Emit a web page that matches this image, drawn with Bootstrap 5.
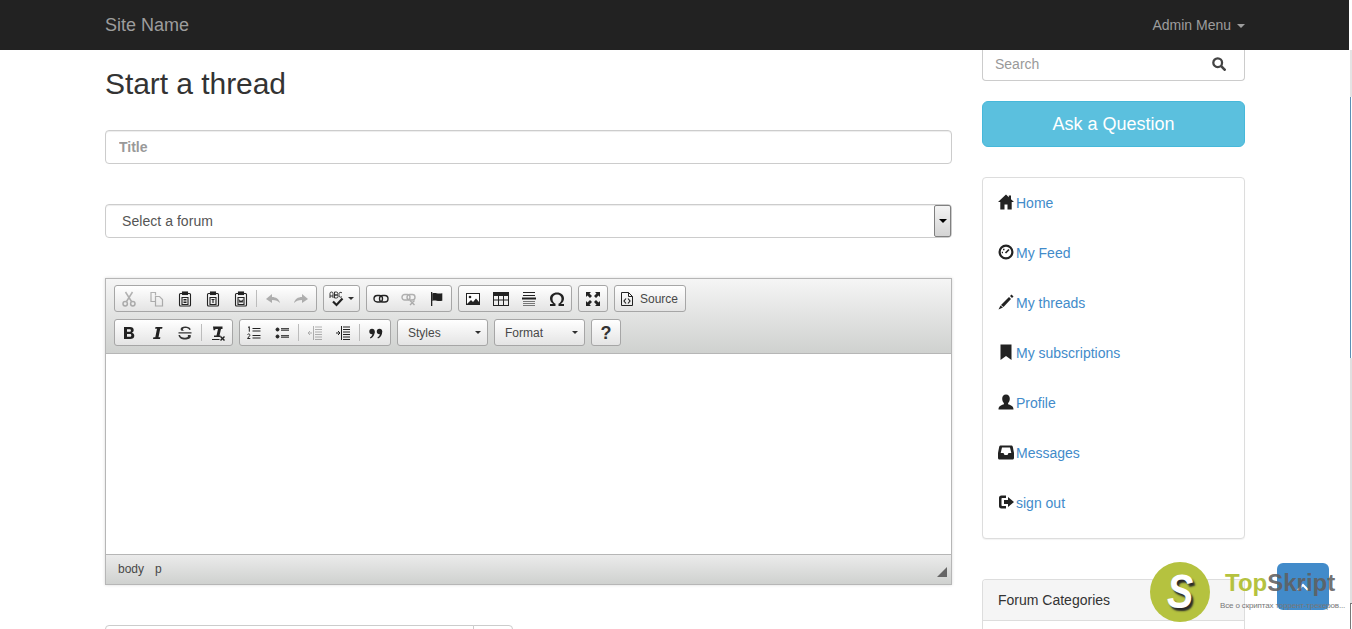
<!DOCTYPE html>
<html lang="en">
<head>
<meta charset="utf-8">
<title>Start a thread</title>
<link href="https://cdn.jsdelivr.net/npm/bootstrap@5.3.0/dist/css/bootstrap.min.css" rel="stylesheet">
<style>
html,body{height:629px;overflow:hidden}
body{font-family:"Liberation Sans",Arial,sans-serif;font-size:14px;line-height:20px;color:#333;background:#fff;position:relative}
.topbar{background:#222;height:50px;padding:0;border:0;margin-right:3px}
.shell{width:1140px;margin-left:105px;display:flex;gap:30px}
.topbar .shell{align-items:center;justify-content:space-between;height:50px}
.site-brand{font-size:18px;color:#9d9d9d;text-decoration:none;padding:0;margin:0}
.admin-link{color:#9d9d9d;text-decoration:none;font-size:14px}
.admin-link::after{content:"";display:inline-block;margin-left:6px;vertical-align:2px;border-top:4px solid #9d9d9d;border-left:4px solid transparent;border-right:4px solid transparent}
.maincol{width:847px;flex:none}
.sidecol{width:263px;flex:none}
.page-title{font-size:30px;line-height:33px;font-weight:400;margin:17px 0 30px;color:#333;font-family:inherit;letter-spacing:-.06px}
.fld{height:34px;font-size:14px;border:1px solid #ccc;border-radius:4px;color:#555;box-shadow:inset 0 1px 1px rgba(0,0,0,.075);font-family:inherit}
.title-fld{padding:6px 13px;font-size:14px;font-weight:700;margin-bottom:40px}
.title-fld::placeholder{color:#999;opacity:1}
.selwrap{position:relative;margin-bottom:40px}
.sel-fld{padding:6px 16px;background-image:none;appearance:none;background:#fff;letter-spacing:.05px}
.selarrow{position:absolute;right:1px;top:1px;width:17px;height:32px;border:1px solid #808080;border-radius:2px;background:linear-gradient(#f4f4f4,#d4d4d4);display:flex;align-items:center;justify-content:center}
.selarrow::after{content:"";border-top:4px solid #000;border-left:4px solid transparent;border-right:4px solid transparent}
.editor{border:1px solid #b6b6b6;height:307px;display:flex;flex-direction:column;box-shadow:0 0 3px rgba(0,0,0,.15);margin-bottom:40px;background:#fff}
.edtop{height:75px;background:linear-gradient(#f5f5f5,#cfd1cf);border-bottom:1px solid #b6b6b6;padding:6px 8px 0;flex:none}
.edrow{display:flex;gap:6px;height:27px;margin-bottom:7px}
.edgrp{display:flex;align-items:center;height:27px;border:1px solid #a6a6a6;border-radius:3px;background:linear-gradient(#fff,#e4e4e4);flex:none}
.edgrp-wide{padding-right:1px}
.tb{width:28px;height:25px;display:flex;align-items:center;justify-content:center;flex:none}
.tb svg{width:16px;height:16px;display:block}
.off svg{opacity:.32}
.sep{width:1px;height:17px;background:#bcbcbc;margin:0 2px 0 1px;flex:none}
.sep-wide{margin:0 2px}
.combo{display:flex;align-items:center;justify-content:space-between;width:89px;padding:0 6px 0 10px;font-size:12px;color:#484848}
.combo::after{content:"";border-top:3px solid #2f2f2f;border-left:3px solid transparent;border-right:3px solid transparent}
.spell{width:18px;margin-left:5px}
.spell svg{width:18px}
.spell-arrow{width:12px;padding:0 0 0 1px}
.helpq{font-size:18px;font-weight:700;color:#333}
.srcbtn{width:70px;font-size:12px;color:#484848;display:flex;align-items:center;gap:5px;padding-left:4px;height:25px}
.srcbtn svg{width:16px;height:16px}
.edbody{flex:1;background:#fff}
.edfoot{height:30px;flex:none;background:linear-gradient(#ebebeb,#cfd1cf);border-top:1px solid #b6b6b6;display:flex;align-items:center;padding:0 12px 2px;font-size:12px;color:#484848;gap:11px;position:relative}
.grip{position:absolute;right:4px;bottom:7px;border-bottom:10px solid #666;border-left:10px solid transparent}
.tailgrp{width:408px;height:34px}
.tailgrp .form-control{height:34px;border-color:#ccc;border-radius:4px 0 0 4px}
.tailgrp .input-group-text{width:40px;background:#fff;border-color:#ccc;border-radius:0 4px 4px 0}
.srch{position:relative;height:31px;margin-bottom:20px}
.srch input{height:31px;border-top:0;border-radius:0 0 4px 4px;padding:0 12px 2px 12px;box-shadow:none}
.srch input::placeholder{color:#999;opacity:1}
.srch svg{position:absolute;right:19px;top:7px;width:14px;height:14px}
.askbtn{display:block;width:100%;height:46px;background:#5bc0de;border:1px solid #46b8da;border-radius:6px;color:#fff;font-size:18px;line-height:33px;margin-bottom:30px;padding:6px 0}
.navpanel{height:362px;border:1px solid #ddd;border-radius:4px;box-shadow:0 1px 1px rgba(0,0,0,.05);padding:0 15px;margin-bottom:40px;background:#fff}
.navpanel .list-group-item{border:0;padding:0;height:50px;display:flex;align-items:center;background:transparent}
.navpanel a{color:#428bca;text-decoration:none;margin-left:2px}
.navpanel svg{width:16px;height:16px;color:#222;flex:none;margin-top:-3px}
.catpanel{border:1px solid #ddd;border-radius:4px 4px 0 0;border-bottom:0;background:#fff}
.catpanel .card-header{background:#f5f5f5;height:41px;padding:10px 15px;border-bottom:1px solid #ddd;border-radius:3px 3px 0 0;color:#333;font-size:14px}
.catpanel .card-body{height:40px}
.edgerail{position:absolute;left:1350px;top:50px;width:2px;height:579px;display:flex;flex-direction:column}
.rail-a{height:47px;background:#e4e4e4}
.rail-b{height:261px;width:1px;background:#5a8fb5}
.rail-c{height:245px;background:#e0e0e0}
.rail-d{height:26px;border:1px solid #777;border-right:0;border-bottom:0}
.totop{position:absolute;left:1277px;top:563px;width:52px;height:47px;background:#428bca;border-radius:6px;border:0;padding:0;display:flex;align-items:center;justify-content:center}
.totop svg{width:14px;height:10px}
.wm-disc{position:absolute;left:1150px;top:562px;width:60px;height:60px;border-radius:50%;background:#b5c23f;display:flex;align-items:center;justify-content:center}
.wm-s{display:block;font-size:48px;font-weight:700;font-style:italic;color:#fff;line-height:60px;text-shadow:3px 3px 2px #2a2a2a;transform:scaleX(.82)}
.wm-name{position:absolute;left:1225px;top:570px;font-size:24px;line-height:26px;font-weight:700;white-space:nowrap}
.wm-name b{color:#b5c23f}
.wm-name i{font-style:normal;color:rgba(95,95,95,.9)}
.wm-sub{position:absolute;left:1220px;top:600px;font-size:8px;line-height:12px;color:#777;white-space:nowrap;letter-spacing:-.15px}
</style>
</head>
<body>
<nav class="navbar topbar">
  <div class="shell">
    <a class="navbar-brand site-brand" href="#">Site Name</a>
    <a class="admin-link" href="#">Admin Menu</a>
  </div>
</nav>

<div class="shell">
  <main class="maincol">
    <h1 class="page-title">Start a thread</h1>
    <input class="form-control fld title-fld" placeholder="Title">
    <div class="selwrap">
      <select class="form-select fld sel-fld"><option>Select a forum</option></select>
      <span class="selarrow"></span>
    </div>
    <div class="editor">
      <div class="edtop">
        <div class="edrow">
          <div class="edgrp edgrp-wide">
            <span class="tb off"><svg viewBox="0 0 16 16" fill="none" stroke="#222" stroke-width="1.5"><path d="M4.500 1 10.500 10.500M11.500 1 5.500 10.500"/><circle cx="4.200" cy="12.800" r="2.200"/><circle cx="11.800" cy="12.800" r="2.200"/></svg></span>
            <span class="tb off"><svg viewBox="0 0 16 16" fill="none" stroke="#222" stroke-width="1.200"><path d="M6.500 4.500V1.500H2v9h4"/><path d="M6.500 5.500h4l3 3v6.500h-7z"/></svg></span>
            <span class="tb"><svg viewBox="0 0 16 16" fill="none" stroke="#222" stroke-width="1.100"><path d="M5 2.500H3.500a1 1 0 0 0-1 1v10.500a1 1 0 0 0 1 1h9a1 1 0 0 0 1-1V3.500a1 1 0 0 0-1-1H11"/><rect x="5.500" y="1" width="5" height="2.500" fill="#222"/><path d="M5 6.500h6v7H5zM6.500 8.500h3M6.500 10h3M6.500 11.500h3"/></svg></span>
            <span class="tb"><svg viewBox="0 0 16 16" fill="none" stroke="#222" stroke-width="1.100"><path d="M5 2.500H3.500a1 1 0 0 0-1 1v10.500a1 1 0 0 0 1 1h9a1 1 0 0 0 1-1V3.500a1 1 0 0 0-1-1H11"/><rect x="5.500" y="1" width="5" height="2.500" fill="#222"/><path d="M5 6.500h6v7H5zM6.500 8.500h3M8 8.500v3.500"/></svg></span>
            <span class="tb"><svg viewBox="0 0 16 16" fill="none" stroke="#222" stroke-width="1.100"><path d="M5 2.500H3.500a1 1 0 0 0-1 1v10.500a1 1 0 0 0 1 1h9a1 1 0 0 0 1-1V3.500a1 1 0 0 0-1-1H11"/><rect x="5.500" y="1" width="5" height="2.500" fill="#222"/><path d="M5 6.500h6v7H5z"/><path d="M6 8.500l1 3 1-2 1 2 1-3" stroke-width="1"/></svg></span>
            <span class="sep"></span>
            <span class="tb off"><svg viewBox="0 0 16 16" fill="#222"><path d="M1 8l6-5v3c4 0 7 2 8 6-2-2-4-3-8-3v3z"/></svg></span>
            <span class="tb off"><svg viewBox="0 0 16 16" fill="#222"><path d="M15 8 9 3v3c-4 0-7 2-8 6 2-2 4-3 8-3v3z"/></svg></span>
          </div>
          <div class="edgrp">
            <span class="tb spell"><svg viewBox="0 0 18 16" fill="none" stroke="#222"><path d="M1 7V2.500a1.300 1.300 0 0 1 3 0V7M1 5h3M5.500 7V1h1.800a1.400 1.400 0 0 1 0 3H5.500h2a1.500 1.500 0 0 1 0 3zM13 2a1.700 1.700 0 0 0-3 1.500V5a1.700 1.700 0 0 0 3 .5" stroke-width=".9"/><path d="M4 10.500l3.500 3.500 6-6.500" stroke-width="2.200"/></svg></span>
            <span class="combo spell-arrow"></span>
          </div>
          <div class="edgrp">
            <span class="tb"><svg viewBox="0 0 16 16" fill="none" stroke="#222" stroke-width="1.400"><rect x="1" y="4.500" width="8.500" height="6.500" rx="3.200"/><rect x="6.500" y="4.500" width="8.500" height="6.500" rx="3.200"/></svg></span>
            <span class="tb off"><svg viewBox="0 0 16 16" fill="none" stroke="#222" stroke-width="1.400"><rect x="1" y="3.500" width="8" height="5.500" rx="2.700"/><rect x="6" y="3.500" width="8" height="5.500" rx="2.700"/><path d="M9 9.500l4.500 4.500M13.500 9.500 9 14"/></svg></span>
            <span class="tb"><svg viewBox="0 0 16 16" fill="#222"><path d="M2 1h1.300v14H2z"/><path d="M3.300 2.500c3-1.500 5 1 10-.3v7.500c-5 1.300-7-1.200-10 .3z"/></svg></span>
          </div>
          <div class="edgrp">
            <span class="tb"><svg viewBox="0 0 16 16"><rect x="1.500" y="2.500" width="13" height="11" fill="#fff" stroke="#222"/><circle cx="5" cy="6" r="1.300" fill="#222"/><path d="M2 13l4-4 2 2 3-3.500 3 3.500V13z" fill="#222"/></svg></span>
            <span class="tb"><svg viewBox="0 0 16 16" fill="none" stroke="#222"><rect x=".5" y="1.500" width="15" height="13"/><path d="M.5 3.500h15" stroke-width="3"/><path d="M.5 9h15M5.500 4v10M10.500 4v10"/></svg></span>
            <span class="tb"><svg viewBox="0 0 16 16" stroke="#222"><path d="M2 1.500h12M2 4.500h12" stroke-width="1"/><path d="M1 7.500h14" stroke-width="2"/><path d="M2 10.500h12M2 12.500h12M2 14.500h12" stroke="#777"/></svg></span>
            <span class="tb"><svg viewBox="0 0 16 16" fill="#222"><path d="M1 15v-2h3.200C2 11.500 1 9.500 1 7.500 1 4 4 1.500 8 1.500s7 2.500 7 6c0 2-1 4-3.200 5.500H15v2H9.500v-2.200c1.900-.8 3-2.700 3-5 0-2.700-1.800-4.400-4.500-4.400S3.500 5.100 3.500 7.800c0 2.300 1.100 4.200 3 5V15z"/></svg></span>
          </div>
          <div class="edgrp">
            <span class="tb"><svg viewBox="0 0 16 16" fill="#222"><path d="M1 1h5L4.500 2.500 7 5 5 7 2.500 4.500 1 6zM15 1v5l-1.500-1.500L11 7 9 5l2.500-2.500L10 1zM1 15v-5l1.500 1.500L5 9l2 2-2.500 2.500L6 15zM15 15h-5l1.500-1.500L9 11l2-2 2.500 2.500L15 10z"/></svg></span>
          </div>
          <div class="edgrp">
            <span class="srcbtn"><svg viewBox="0 0 16 16" fill="none" stroke="#222"><path d="M2.500 1.500h7l4 4v9h-11zM9.500 1.500v4h4" stroke-width="1"/><path d="M7 7.500 5 10l2 2.500M9 7.500l2 2.500-2 2.500" stroke-width="1.200"/></svg>Source</span>
          </div>
        </div>
        <div class="edrow">
          <div class="edgrp">
            <span class="tb"><svg viewBox="0 0 16 16" fill="#222"><path d="M3 2h6c2.500 0 3.700 1.200 3.700 3 0 1.300-.7 2.200-1.800 2.700 1.500.4 2.400 1.500 2.400 3 0 2.200-1.600 3.300-4.300 3.300H3zm3 2.200v2.600h2.500c1 0 1.400-.5 1.400-1.300s-.5-1.300-1.400-1.300zM6 9v2.800h2.800c1 0 1.500-.5 1.500-1.400S9.800 9 8.800 9z"/></svg></span>
            <span class="tb"><svg viewBox="0 0 16 16" fill="#222"><path d="M6.500 2h7l-.4 1.800h-1.900L9.500 12.200h1.900L11 14H4l.4-1.800h1.900L8 3.800H6.100z"/></svg></span>
            <span class="tb"><svg viewBox="0 0 16 16" fill="#333"><path d="M12.300 5c-.5-1.500-2-1.900-3.800-1.900-1.500 0-2.500.5-2.500 1.400 0 .6.500 1 1.500 1.300H4.600C3.900 5.300 3.600 4.800 3.600 4.200 3.600 2.300 5.600 1.500 8.300 1.500c2.500 0 4.800.7 5.500 3zM1.500 7.300h13v1.300h-13zM3 10c.4 1.700 2 2.800 5 2.800 1.800 0 3-.6 3-1.700 0-.3-.1-.7-.4-1.100h2.900c.2.400.3.800.3 1.200 0 2.200-2.500 3.300-5.800 3.300-3.400 0-6-1.200-6.500-4.500z"/></svg></span>
            <span class="sep sep-wide"></span>
            <span class="tb"><svg viewBox="0 0 16 16" fill="#222"><path d="M3 1.500h9.500V4H11L9.500 10.500h1V12H4v-1.500h2.500L8 4H5.500L5 5.200H3.500z"/><path d="M2 14h7.500v1H2z"/><path d="m11 11 1.500 1.500L14 11l1 1-1.500 1.500L15 15l-1 1-1.500-1.500L11 16l-1-1 1.500-1.500L10 12z"/></svg></span>
          </div>
          <div class="edgrp">
            <span class="tb"><svg viewBox="0 0 16 16" stroke="#222" fill="none"><path d="M6.500 3.500h8M6.500 6h8M6.500 10.500h8M6.500 13h8" stroke-width="1.200"/><path d="M2 2.500l1.300-.8v5M1.500 9.500c1-1 2.800-.5 2.300 1L1.500 13.500h2.800" stroke-width="1"/></svg></span>
            <span class="tb"><svg viewBox="0 0 16 16" stroke="#222" fill="#222"><circle cx="3.500" cy="4.500" r="1.500"/><circle cx="3.500" cy="11.500" r="1.500"/><path d="M7 3.700h8M7 5.200h8M7 10.700h8M7 12.200h8" stroke-width="1"/></svg></span>
            <span class="sep sep-wide"></span>
            <span class="tb off"><svg viewBox="0 0 16 16" stroke="#222" fill="none"><path d="M8 2h7M8 4.500h7M8 7h7M8 9.500h7M8 12h7M8 14.500h7M6.500 1v14" stroke-width="1"/><path d="M5 8H1M3 6 1 8l2 2" stroke-width="1"/></svg></span>
            <span class="tb"><svg viewBox="0 0 16 16" stroke="#222" fill="none"><path d="M8 2h7M8 4.500h7M8 7h7M8 9.500h7M8 12h7M8 14.500h7M6.500 1v14" stroke-width="1"/><path d="M1 8h4M3 6l2 2-2 2" stroke-width="1"/></svg></span>
            <span class="sep sep-wide"></span>
            <span class="tb"><svg viewBox="0 0 16 16" fill="#222"><circle cx="4" cy="6.500" r="2.700"/><path d="M4.500 6.500h2.200C6.700 10 5 12.500 2.500 13.500l-.6-1C3.500 11.500 4.500 10 4.500 8z"/><circle cx="11.500" cy="6.500" r="2.700"/><path d="M12 6.500h2.200c0 3.500-1.700 6-4.200 7l-.6-1c1.600-1 2.600-2.500 2.600-4.500z"/></svg></span>
          </div>
          <div class="edgrp"><span class="combo">Styles</span></div>
          <div class="edgrp"><span class="combo">Format</span></div>
          <div class="edgrp"><span class="tb helpq">?</span></div>
        </div>
      </div>
      <div class="edbody"></div>
      <div class="edfoot"><span>body</span><span>p</span><span class="grip"></span></div>
    </div>
    <div class="input-group tailgrp"><input class="form-control"><span class="input-group-text"></span></div>
  </main>

  <aside class="sidecol">
    <div class="srch">
      <input class="form-control fld" placeholder="Search">
      <svg viewBox="0 0 16 16" fill="none" stroke="#444" stroke-width="2.600"><circle cx="6.500" cy="6.500" r="5"/><path d="m10.500 10.500 5 5" stroke-width="3"/></svg>
    </div>
    <a class="btn askbtn" href="#">Ask a Question</a>
    <div class="navpanel">
      <ul class="list-group list-group-flush">
        <li class="list-group-item"><svg viewBox="0 0 16 16" fill="currentColor"><path d="M8 .5 0 8h2.300v7.500h4.200v-5h3v5h4.200V8H16l-3-2.800V1.500h-2.200v1.700z"/></svg><a href="#">Home</a></li>
        <li class="list-group-item"><svg viewBox="0 0 16 16" fill="none" stroke="currentColor" stroke-width="2.200"><circle cx="8" cy="8" r="6.400"/><path d="m7.500 9 3.500-3.500" stroke-width="1.700"/><path d="M5 5.500h1.500M3.800 8.500h1.200" stroke-width="1.400"/></svg><a href="#">My Feed</a></li>
        <li class="list-group-item"><svg viewBox="0 0 16 16" fill="currentColor"><path d="M13.500.5l2 2-1.500 1.500-2-2zM11 3l2 2-7.500 8-2.500-2zM2.500 11.500l2.500 2L.5 15.500z"/></svg><a href="#">My threads</a></li>
        <li class="list-group-item"><svg viewBox="0 0 16 16" fill="currentColor"><path d="M2.500 .5h11v15.500L8 12l-5.500 4z"/></svg><a href="#">My subscriptions</a></li>
        <li class="list-group-item"><svg viewBox="0 0 16 16" fill="currentColor"><path d="M8 .5c2.500 0 3.800 1.900 3.800 4.200 0 1.800-.7 3.300-1.700 4.200v1.400c1.800.8 5.400 1.200 5.400 5.200H.5c0-4 3.600-4.400 5.400-5.200V8.900C4.900 8 4.200 6.500 4.200 4.700 4.200 2.400 5.500.5 8 .5z"/></svg><a href="#">Profile</a></li>
        <li class="list-group-item"><svg viewBox="0 0 16 16" fill="currentColor"><path fill-rule="evenodd" d="M3 1.500h10c1 0 1.600.5 1.800 1.300L16 9v5c0 .9-.6 1.500-1.500 1.500h-13C.6 15.500 0 14.900 0 14V9l1.200-6.200C1.400 2 2 1.500 3 1.500zM4 3.500 2.700 9H5.500l1 2h3l1-2h2.800L12 3.500z"/></svg><a href="#">Messages</a></li>
        <li class="list-group-item"><svg viewBox="0 0 16 16" fill="currentColor"><path d="M3.500 1.500H8v2.500H4.200c-.5 0-.7.300-.7.700v6.600c0 .4.200.7.700.7H8v2.500H3.500C1.700 14.500 1 13.500 1 12V4c0-1.500.7-2.500 2.500-2.500z"/><path d="M6 6h4V3l6 5-6 5v-3H6z"/></svg><a href="#">sign out</a></li>
      </ul>
    </div>
    <div class="card catpanel">
      <div class="card-header">Forum Categories</div>
      <div class="card-body"></div>
    </div>
  </aside>
</div>

<div class="edgerail"><div class="rail-a"></div><div class="rail-b"></div><div class="rail-c"></div><div class="rail-d"></div></div>
<button class="totop" aria-label="Back to top"><svg viewBox="0 0 14 10" fill="none" stroke="#fff" stroke-width="2"><path d="M2 8l5-5 5 5"/></svg></button>
<div class="wm-disc"><span class="wm-s">S</span></div>
<div class="wm-name"><b>Top</b><i>Skript</i></div>
<div class="wm-sub">Все о скриптах торрент-трекеров...</div>
</body>
</html>
